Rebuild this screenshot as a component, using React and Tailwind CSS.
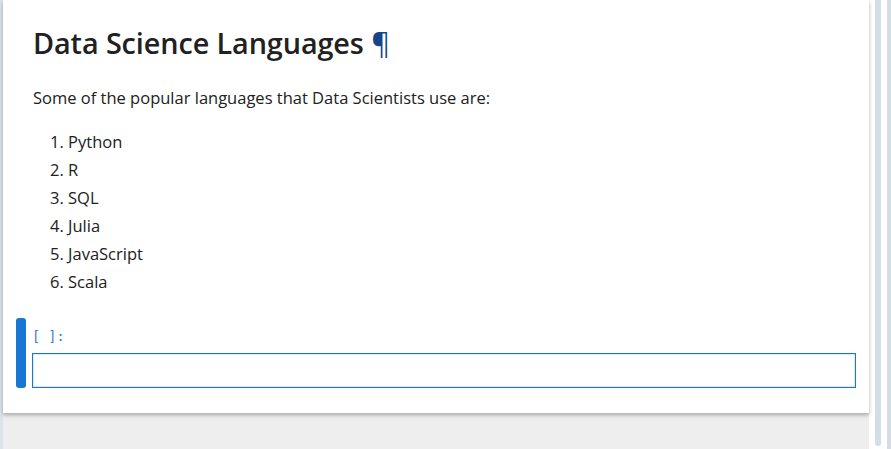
import React from 'react';

const languages = ['Python', 'R', 'SQL', 'Julia', 'JavaScript', 'Scala'];

const App = () => {
	return (
		<div className="flex w-[891px] h-[449px] bg-white overflow-hidden" style={{ fontFamily: '"Open Sans", "Noto Sans", sans-serif' }}>
			<div className="w-[3px] bg-[#dbe3eb]" />
			<div className="flex flex-col w-[866px]">
				{/* notebook panel */}
				<div className="bg-white h-[413px] shadow-[0_2px_4px_rgba(0,0,0,0.3)] relative z-10">
					<div className="pl-[30px] pt-[23px] text-[#212121]">
						<h2 className="text-[28.8px] font-semibold leading-[40px] tracking-[-0.1px]">
							Data Science Languages <span className="text-[#15448a] font-normal">¶</span>
						</h2>
						<p className="text-[16.5px] leading-[22px] mt-[24px]">Some of the popular languages that Data Scientists use are:</p>
						<ol className="mt-[19px] pl-[17px] text-[16.5px]">
							{languages.map((lang, i) => (
								<li key={lang} className="leading-[28px]">{i + 1}. {lang}</li>
							))}
						</ol>
					</div>
					<div className="flex mt-[22px] pl-[13px] pr-[13px]">
						<div className="w-[10px] h-[70px] rounded-[3px] bg-[#1976d2]" />
						<div className="flex-1 pl-[6px]">
							<div className="h-[35px] pt-[10px] text-[13.5px] leading-[16px] text-[#3d80c4]" style={{ fontFamily: '"DejaVu Sans Mono", monospace' }}>
								[ ]:
							</div>
							<div className="h-[35px] border border-[#1976d2] ring-1 ring-inset ring-[#dbeafb]" />
						</div>
					</div>
				</div>
				<div className="flex-1 bg-[#eeeeee]" />
			</div>
			<div className="w-[6px]" />
			<div className="w-[6px] h-[446px] bg-[#d3dde6] rounded-b-[3px]" />
			<div className="w-[6px]" />
			<div className="w-[4px] bg-[#d3dde6]" />
		</div>
	);
};

export default App;
